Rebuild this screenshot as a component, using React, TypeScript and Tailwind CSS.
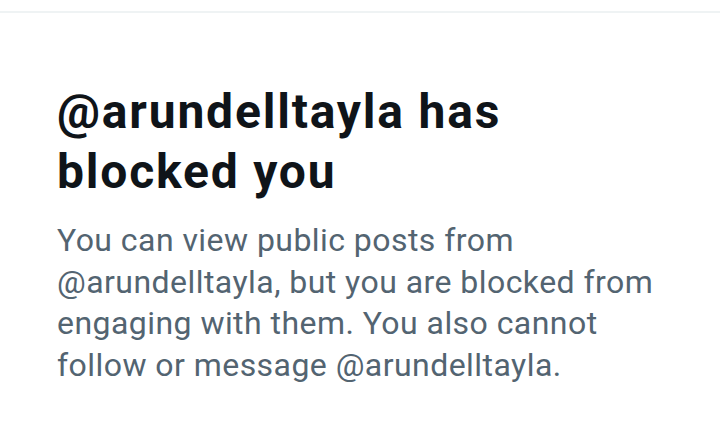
export default function App() {
  return (
    <div className="w-[720px] h-[435px] bg-white overflow-hidden" style={{ fontFamily: "Roboto, 'Noto Sans', sans-serif" }}>
      <div className="mt-[11px] h-[2px] bg-[#eff3f4]" />
      <div className="pl-[57px] pr-[43px] pt-[69px]">
        <h1 className="text-[48px] leading-[60px] font-bold tracking-[1.8px] text-[#0f1419]">
          @arundelltayla has blocked you
        </h1>
        <p className="mt-[18px] text-[32px] leading-[41.5px] tracking-[0.45px] text-[#536471]">
          You can view public posts from @arundelltayla, but you are blocked from engaging with them. You also cannot follow or message @arundelltayla.
        </p>
      </div>
    </div>
  );
}
